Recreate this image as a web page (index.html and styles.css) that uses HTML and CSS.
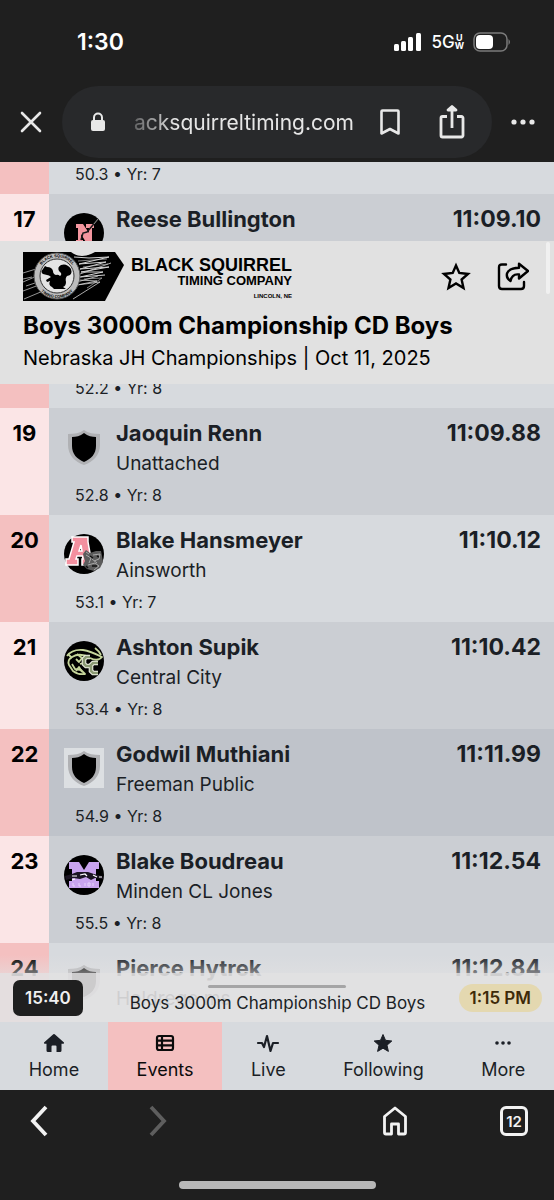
FILE: index.html
```html
<!DOCTYPE html>
<html lang="en">
<head>
    <meta charset="utf-8">
    <meta name="viewport" content="width=device-width, initial-scale=1">
    <title>Boys 3000m Championship CD Boys</title>
    <link rel="stylesheet" href="styles.css">
</head>
<body>
    <!-- shared shapes -->
    <svg class="defs" width="0" height="0" aria-hidden="true">
        <symbol id="shield" viewBox="0 0 40 40">
            <path d="M20 3 C16 6 10 7 4 7 V18 C4 28 11 35 20 38 C29 35 36 28 36 18 V7 C30 7 24 6 20 3Z" fill="#b0b1b4"/>
            <path d="M20 6 C16 9 12 10 8 10 V19 C8 27 13 32 20 35 C27 32 32 27 32 19 V10 C28 10 24 9 20 6Z" fill="#000"/>
        </symbol>
    </svg>

    <header class="browser-top">
        <div class="status">
            <span class="clock">1:30</span>
            <div class="signals">
                <svg width="28" height="20" viewBox="0 0 28 20" fill="#fff" aria-hidden="true">
                    <rect x="0" y="12" width="5" height="7" rx="1.5"/>
                    <rect x="7" y="9" width="5" height="10" rx="1.5"/>
                    <rect x="14" y="5" width="5" height="14" rx="1.5"/>
                    <rect x="22" y="1" width="5" height="18" rx="1.5"/>
                </svg>
                <span class="network">5G<span class="uw"><span>U</span><span>W</span></span></span>
                <svg width="38" height="20" viewBox="0 0 38 20" aria-hidden="true">
                    <rect x="1" y="1" width="33" height="18" rx="6" fill="none" stroke="#7b7b7b" stroke-width="1.5"/>
                    <rect x="3" y="3" width="17" height="14" rx="4" fill="#fff"/>
                    <path d="M35.5 7 q3 3 0 6z" fill="#7b7b7b"/>
                </svg>
            </div>
        </div>
        <div class="address">
            <button class="icon-btn close" type="button" aria-label="Close">
                <svg width="24" height="24" viewBox="0 0 24 24" fill="none" stroke="#e8e8e8" stroke-width="2.6" stroke-linecap="round"><path d="M3 3 L21 21 M21 3 L3 21"/></svg>
            </button>
            <div class="pill">
                <svg width="16" height="20" viewBox="0 0 16 20" aria-hidden="true">
                    <rect x="1" y="8" width="14" height="11" rx="2" fill="#e8e8e8"/>
                    <path d="M4 9 V5.5 a4 4 0 0 1 8 0 V9" fill="none" stroke="#e8e8e8" stroke-width="2"/>
                </svg>
                <button class="url" type="button">acksquirreltiming.com</button>
                <button class="icon-btn" type="button" aria-label="Bookmark">
                    <svg width="22" height="28" viewBox="0 0 22 28" fill="none" stroke="#e8e8e8" stroke-width="2.6" stroke-linejoin="round"><path d="M2.5 3.5 a1 1 0 0 1 1 -1 H18.500 a1 1 0 0 1 1 1 V25.5 L11 21 L2.5 25.5Z"/></svg>
                </button>
                <button class="icon-btn" type="button" aria-label="Share">
                    <svg width="28" height="36" viewBox="0 0 28 36" fill="none" stroke="#e8e8e8" stroke-width="2.8" stroke-linejoin="round"><path d="M9 12.5 H4.500 a1.5 1.5 0 0 0 -1.5 1.5 V31.5 a1.5 1.5 0 0 0 1.5 1.5 H23.500 a1.5 1.5 0 0 0 1.5 -1.5 V14 a1.5 1.5 0 0 0 -1.5 -1.5 H19 M14 24 V3"/><path d="M10 6 L14 2.500 L18 6Z" fill="#e8e8e8"/></svg>
                </button>
            </div>
            <button class="icon-btn more" type="button" aria-label="Menu">
                <svg width="24" height="6" viewBox="0 0 24 6" fill="#e8e8e8"><circle cx="3" cy="3" r="2.6"/><circle cx="12" cy="3" r="2.6"/><circle cx="21" cy="3" r="2.6"/></svg>
            </button>
        </div>
    </header>

    <main class="results">
        <table class="table">
            <tbody>
                <tr class="row even cut">
                    <td class="rank"></td>
                    <td class="athlete"><p class="meta">50.3 • Yr: 7</p></td>
                    <td class="mark"></td>
                </tr>
                <tr class="row odd">
                    <td class="rank">17</td>
                    <td class="athlete">
                        <div class="who">
                            <svg class="logo" viewBox="0 0 40 40" aria-hidden="true">
                                <circle cx="20" cy="20" r="20" fill="#000"/>
                                <path d="M12 11 H19 L25 20 V15 H22 V11 H30 V15 H28 V31 H23 L17 21 V27 H19 V31 H12 V27 H14 V15 H12Z" fill="#f3969f"/>
                                <path d="M34 6 L23 19 L19 20 L17 27" fill="none" stroke="#1b1b1b" stroke-width="1.5"/>
                                <path d="M34 6 L30 11" stroke="#8a8a8a" stroke-width="1"/>
                            </svg>
                            <div><p class="name">Reese Bullington</p></div>
                        </div>
                    </td>
                    <td class="mark">11:09.10</td>
                </tr>
                <tr class="row even">
                    <td class="rank"></td>
                    <td class="athlete low"><p class="meta">52.2 • Yr: 8</p></td>
                    <td class="mark"></td>
                </tr>
                <tr class="row odd">
                    <td class="rank">19</td>
                    <td class="athlete">
                        <div class="who">
                            <svg class="logo" aria-hidden="true"><use href="#shield"/></svg>
                            <div><p class="name">Jaoquin Renn</p><p class="team">Unattached</p></div>
                        </div>
                        <p class="meta">52.8 • Yr: 8</p>
                    </td>
                    <td class="mark">11:09.88</td>
                </tr>
                <tr class="row even">
                    <td class="rank">20</td>
                    <td class="athlete">
                        <div class="who">
                            <svg class="logo" viewBox="0 0 40 40" aria-hidden="true">
                                <circle cx="20" cy="20" r="20" fill="#000"/>
                                <path d="M8 3 H24 V8 L27 25 H29 V31 H18 V25 H19 L18.5 22 H13 L12 25 H14 V31 H2 V25 H5 L10 8 H8Z M15 17 H18 L17 11Z" fill="#f3909f" stroke="#fff" stroke-width="1.5" fill-rule="evenodd"/>
                                <path d="M19 20 L22 16 L26 19 L32 17 L37 17 L38 22 L39 28 L36 34 L30 37 L23 35 L19 31 L21 27Z" fill="#5c5c5c"/>
                                <path d="M22 21 L27 24 L25 29 M29 21 L36 20 L35 25 L30 27 M24 31 L31 29 L35 32 L30 36 M22 18 L25 20 M28 25 L33 29" fill="none" stroke="#a8a8a8" stroke-width="1"/>
                                <path d="M26 22 L29 24 M33 22 L35 23 M28 32 H33 M22 32 L24 34" stroke="#111" stroke-width="1.5"/>
                            </svg>
                            <div><p class="name">Blake Hansmeyer</p><p class="team">Ainsworth</p></div>
                        </div>
                        <p class="meta">53.1 • Yr: 7</p>
                    </td>
                    <td class="mark">11:10.12</td>
                </tr>
                <tr class="row odd">
                    <td class="rank">21</td>
                    <td class="athlete">
                        <div class="who">
                            <svg class="logo" viewBox="0 0 40 40" aria-hidden="true">
                                <circle cx="20" cy="20" r="20" fill="#000"/>
                                <g fill="none" stroke="#c5d59b" stroke-width="1.8" stroke-linejoin="round">
                                    <path d="M3 15 Q8 8 19 9 Q26 10 38 16 Q34 21 26 17 Q16 11 8 16 Q3 19 5 24 L9 30 Q14 34 21 33 L17 29 L11 28 L8 23"/>
                                    <path d="M13 13 L18 17 L15 21 L12 18 M16 23 L19 22 M12 30 L15 26 L18 31 M4 13 L8 17 M31 7 Q35 10 37 14"/>
                                </g>
                                <path d="M26 16 H22 L20 18 V23 L22 25 H26 M34 22 H29 L27 24 V30 L29 32 H34" fill="none" stroke="#f0f3e6" stroke-width="4.600"/>
                                <path d="M26 16 H22 L20 18 V23 L22 25 H26 M34 22 H29 L27 24 V30 L29 32 H34" fill="none" stroke="#8b9a74" stroke-width="2.600"/>
                            </svg>
                            <div><p class="name">Ashton Supik</p><p class="team">Central City</p></div>
                        </div>
                        <p class="meta">53.4 • Yr: 8</p>
                    </td>
                    <td class="mark">11:10.42</td>
                </tr>
                <tr class="row active">
                    <td class="rank">22</td>
                    <td class="athlete">
                        <div class="who">
                            <svg class="logo tile" aria-hidden="true"><use href="#shield"/></svg>
                            <div><p class="name">Godwil Muthiani</p><p class="team">Freeman Public</p></div>
                        </div>
                        <p class="meta">54.9 • Yr: 8</p>
                    </td>
                    <td class="mark">11:11.99</td>
                </tr>
                <tr class="row odd">
                    <td class="rank">23</td>
                    <td class="athlete">
                        <div class="who">
                            <svg class="logo" viewBox="0 0 40 40" aria-hidden="true">
                                <circle cx="20" cy="20" r="20" fill="#000"/>
                                <path d="M5 7 H15 L20 15 L25 7 H35 V14 H32 V26 H35 V33 H5 V26 H8 V14 H5Z" fill="#c9a4ee"/>
                                <path d="M1 21 L8 19 L13 17 H24 L30 19 L38 21 L39 24 L31 23 L27 25 L22 22 L16 24 L9 23 L2 25Z" fill="#1c1523"/>
                                <path d="M8 21 L13 21 M16 20 L21 19 L23 21 M29 20 L33 22 M11 24 L8 25 M35 22 L38 22" fill="none" stroke="#fff" stroke-width="1.2"/>
                                <path d="M9 28 V31 H11 M15 28 V31 H17 M21 28 V31 M24 28 H26 V31 H24Z M29 28 V31" fill="none" stroke="#e6d3fb" stroke-width="1"/>
                            </svg>
                            <div><p class="name">Blake Boudreau</p><p class="team">Minden CL Jones</p></div>
                        </div>
                        <p class="meta">55.5 • Yr: 8</p>
                    </td>
                    <td class="mark">11:12.54</td>
                </tr>
                <tr class="row even">
                    <td class="rank">24</td>
                    <td class="athlete">
                        <div class="who">
                            <svg class="logo" aria-hidden="true"><use href="#shield"/></svg>
                            <div><p class="name">Pierce Hytrek</p><p class="team">Holdrege ms</p></div>
                        </div>
                    </td>
                    <td class="mark">11:12.84</td>
                </tr>
            </tbody>
        </table>

        <section class="event">
            <div class="event-top">
                <a class="brand" href="#">
                    <svg width="102" height="50" viewBox="0 0 102 50" aria-hidden="true">
                        <path d="M0 0 H92 L101 13 L82 49 H0Z" fill="#000"/>
                        <path d="M48 0 Q58 8 72 0Z" fill="#e1e1e1"/>
                        <g fill="none" stroke="#d4d4d4">
                            <path d="M0 21 L13 17 M0 30 L14 24 M0 27 L9 25 M0 39 L16 33 M1 47 L20 39 M3 34 L12 31" stroke-width="0.7"/>
                            <path d="M51 5 L66 6 L86 5 L56 12 L83 10 L57 17 L86 15 L58 20 L80 20 L57 25 L82 23" stroke-width="1"/>
                            <path d="M56 28 L74 29 L54 33 L77 30 L50 47 M57 22 L88 11 M54 30 L75 24" stroke-width="0.8"/>
                            <path d="M55 9 L84 7 M60 15 L85 12 M61 27 L79 26 L64 36" stroke-width="0.6"/>
                        </g>
                        <circle cx="34" cy="24" r="23" fill="#bdbdbd" stroke="#555" stroke-width="1"/>
                        <circle cx="34" cy="24" r="17" fill="#e4e4e4" stroke="#333" stroke-width="1"/>
                        <path id="ringTop" d="M15 24 A19 19 0 0 1 53 24" fill="none"/>
                        <path id="ringBottom" d="M12 24 A22 22 0 0 0 56 24" fill="none"/>
                        <text class="ring"><textPath href="#ringTop" startOffset="50%" text-anchor="middle">BLACK SQUIRREL</textPath></text>
                        <text class="ring"><textPath href="#ringBottom" startOffset="50%" text-anchor="middle">TIMING COMPANY</textPath></text>
                        <path d="M20 17 L22 14 L24 15 Q29 15 30 19 Q30 22 33 23 Q35 22 37 24 Q40 22 36 19 Q34 15 38 13 Q44 11 48 17 Q50 23 44 24 Q42 26 43 30 Q43 34 40 35 L43 37 H31 L29 35 Q25 33 27 29 L24 30 L23 28 L28 25 Q26 23 24 23 L20 22 Q17 20 20 17Z" fill="#000"/>
                    </svg>
                    <span class="brand-text">
                        <span class="brand-name">BLACK SQUIRREL</span>
                        <span class="brand-sub">TIMING COMPANY</span>
                        <span class="brand-city">LINCOLN, NE</span>
                    </span>
                </a>
                <div class="event-actions">
                    <button class="icon-btn" type="button" aria-label="Follow event">
                        <svg width="30" height="30" viewBox="0 0 30 30" fill="none" stroke="#000" stroke-width="2.4"><path d="M15 3.5 L18.300 11 L27 12 L20.600 17.500 L22.5 26 L15 21.5 L7.500 26 L9.4 17.5 L3 12 L11.7 11Z"/></svg>
                    </button>
                    <button class="icon-btn" type="button" aria-label="Share event">
                        <svg width="32" height="30" viewBox="0 0 32 30" fill="none" stroke="#000" stroke-width="2.4" stroke-linejoin="round" stroke-linecap="round">
                            <path d="M9 2.5 H5 Q2 2.500 2 5.5 V24 Q2 27 5 27 H24 Q27 27 27 24 V20"/>
                            <path d="M22 1.8 L31 9 L22 16.5 V12.5 Q15 11.500 13.5 19 Q9 16 10 11.5 Q12 6 22 5.8Z"/>
                        </svg>
                    </button>
                </div>
            </div>
            <h1 class="event-title">Boys 3000m Championship CD Boys</h1>
            <p class="event-meet">Nebraska JH Championships | Oct 11, 2025</p>
            <span class="scrollbar"></span>
        </section>

        <section class="ticker">
            <span class="handle"></span>
            <span class="timer">15:40</span>
            <span class="ticker-title">Boys 3000m Championship CD Boys</span>
            <span class="start">1:15 PM</span>
        </section>
    </main>

    <nav class="tabs">
        <a class="tab" href="#">
            <svg width="24" height="24" viewBox="0 0 24 24" fill="#1b1f26" aria-hidden="true"><path d="M11.3 3.2 Q12 2.6 12.7 3.2 L22 11.5 Q22.5 12.8 21 12.8 H19.5 V19.5 Q19.5 21 18 21 H14.5 V15.5 Q14.5 14.5 13.5 14.5 H10.5 Q9.5 14.5 9.5 15.5 V21 H6 Q4.5 21 4.5 19.5 V12.8 H3 Q1.5 12.8 2 11.5Z"/></svg>
            <span>Home</span>
        </a>
        <a class="tab selected" href="#">
            <svg width="24" height="24" viewBox="0 0 24 24" fill="none" stroke="#0b0b0b" stroke-width="2.2" aria-hidden="true"><rect x="4" y="5" width="16" height="14" rx="2"/><path d="M4 9.7 H20 M4 14.3 H20 M9 5 V19"/></svg>
            <span>Events</span>
        </a>
        <a class="tab" href="#">
            <svg width="24" height="24" viewBox="0 0 24 24" fill="none" stroke="#1b1f26" stroke-width="2.2" stroke-linejoin="round" stroke-linecap="round" aria-hidden="true"><path d="M2 12 H6 L8 16 L11 5 L14.5 20 L17 12 H22"/></svg>
            <span>Live</span>
        </a>
        <a class="tab" href="#">
            <svg width="24" height="24" viewBox="0 0 24 24" fill="#1b1f26" stroke="#1b1f26" stroke-linejoin="round" aria-hidden="true"><path d="M12 3.5 L14.5 9.3 L20.8 10 L16 14.2 L17.4 20.4 L12 17.2 L6.6 20.4 L8 14.2 L3.2 10 L9.5 9.3Z"/></svg>
            <span>Following</span>
        </a>
        <a class="tab" href="#">
            <svg width="24" height="24" viewBox="0 0 24 24" fill="#1b1f26" aria-hidden="true"><circle cx="6" cy="12" r="1.8"/><circle cx="12" cy="12" r="1.8"/><circle cx="18" cy="12" r="1.8"/></svg>
            <span>More</span>
        </a>
    </nav>

    <footer class="browser-bottom">
        <div class="browser-nav">
            <button class="icon-btn" type="button" aria-label="Back">
                <svg width="20" height="34" viewBox="0 0 20 34" fill="none" stroke="#f2f2f2" stroke-width="3.8"><path d="M17 3 L4 17 L17 31"/></svg>
            </button>
            <button class="icon-btn" type="button" aria-label="Forward">
                <svg width="20" height="34" viewBox="0 0 20 34" fill="none" stroke="#5e5e5e" stroke-width="3.8"><path d="M3 3 L16 17 L3 31"/></svg>
            </button>
            <span class="spacer"></span>
            <button class="icon-btn" type="button" aria-label="Home page">
                <svg width="26" height="30" viewBox="0 0 26 30" fill="none" stroke="#f2f2f2" stroke-width="2.8" stroke-linejoin="round"><path d="M2.500 10.5 L13 2 L23.500 10.5 V26.5 Q23.500 28 22 28 H16.500 V18 H9.500 V28 H4 Q2.500 28 2.500 26.5Z"/></svg>
            </button>
            <button class="tabs-count" type="button" aria-label="12 open tabs">12</button>
        </div>
        <span class="home-bar"></span>
    </footer>
</body>
</html>
```

FILE: styles.css
```css
* {box-sizing:border-box;}
body {margin:0; height:100vh; display:flex; flex-direction:column; background:#1f1f1f; font-family:Inter, "Liberation Sans", sans-serif; color:#1b1f26; overflow:hidden;}
p, h1 {margin:0;}
a {color:inherit; text-decoration:none;}
button {font-family:inherit; padding:0; border:0; background:none; color:inherit;}
svg {display:block; flex:none;}
.defs {position:absolute;}
.icon-btn {display:flex; align-items:center; justify-content:center;}

/* browser chrome, top */
.browser-top {flex:none; height:162px; color:#fff;}
.status {height:84px; display:flex; justify-content:space-between; align-items:center; padding:0 43px 0 77px;}
.clock {font-size:23px; font-weight:600;}
.signals {display:flex; align-items:center; gap:9px;}
.network {display:flex; align-items:center; font-size:17px; font-weight:500;}
.uw {display:flex; flex-direction:column; align-items:center; font-size:9px; line-height:8px; font-weight:700;}
.address {display:flex; align-items:center; padding:2px 19px 0;}
.pill {flex:1; height:72px; display:flex; align-items:center; margin:0 19px; padding:0 26px 0 28px; border-radius:36px; background:#28292b;}
.url {flex:1; text-align:right; padding-right:25px; font-size:21px; color:#e6e6e6; white-space:nowrap; -webkit-mask-image:linear-gradient(to right, transparent 10px, #000 70px); mask-image:linear-gradient(to right, transparent 10px, #000 70px);}
.pill .icon-btn + .icon-btn {margin-left:37px;}

/* results */
.results {flex:1; min-height:0; position:relative; overflow:hidden; background:#d7dade;}
.table {width:100%; border-collapse:collapse;}
.row {height:107px;}
.row.cut {height:32px;}
.row td {padding:0; vertical-align:top;}
.odd {background:#cbced3;}
.even {background:#d7dade;}
.active {background:#bfc3ca;}
.row .rank {width:49px; padding-top:11px; font-size:22px; line-height:28px; font-weight:700; text-align:center; color:#000; background:#f4c0c0;}
.odd .rank {background:#fbe5e6;}
.row .athlete {padding-left:15px;}
.row .athlete.low, .cut .athlete {vertical-align:bottom;}
.who {display:flex; gap:12px; height:66px; padding-top:11px;}
.logo {width:40px; height:40px; margin-top:8px;}
.tile {background:#dcdfe2;}
.name {font-size:22px; line-height:28px; font-weight:700;}
.team {margin-top:3px; font-size:19px; line-height:28px;}
.meta {height:41px; padding:9px 0 0 11px; font-size:16px; line-height:24px;}
.cut .meta {height:32px; padding-top:0;}
.row .mark {padding:11px 13px 0 0; font-size:23px; line-height:28px; font-weight:700; text-align:right;}

/* event header, stays over the list */
.event {position:absolute; top:79px; left:0; right:0; height:143px; padding:11px 25px 0 23px; background:#e1e1e1; color:#000;}
.event-top {display:flex; justify-content:space-between; align-items:center;}
.brand {display:flex; gap:6px;}
.brand-text {display:flex; flex-direction:column; align-items:flex-end; padding-top:4px; font-family:"Liberation Sans", Arial, sans-serif; font-weight:700;}
.brand-name {font-size:18px; line-height:18px;}
.brand-sub {font-size:13px; line-height:13px;}
.brand-city {margin-top:5px; font-size:6px; line-height:8px;}
.ring {font-family:"Liberation Sans", Arial, sans-serif; font-size:4px; font-weight:700;}
.event-actions {display:flex; gap:26px;}
.event-title {margin-top:8px; font-size:24px; line-height:32px; font-weight:700; white-space:nowrap;}
.event-meet {margin-top:2px; font-size:20px; line-height:28px; white-space:nowrap;}
.scrollbar {position:absolute; top:1px; right:4px; width:4px; height:52px; border-radius:2px; background:#f0f0f0;}

/* now-running strip */
.ticker {position:absolute; left:0; right:0; bottom:0; height:49px; display:grid; grid-template-columns:1fr auto 1fr; align-items:center; padding:0 12px 0 13px; background:rgba(226,225,226,.9);}
.ticker::before {content:""; position:absolute; left:0; right:0; bottom:49px; height:18px; background:linear-gradient(rgba(226,225,226,0), rgba(226,225,226,.5));}
.handle {position:absolute; top:12px; left:50%; width:138px; height:3px; margin-left:-69px; border-radius:2px; background:#a5a5a6;}
.timer {justify-self:start; padding:8px 12px; border-radius:7px; background:#1f1f1f; color:#f0f0f0; font-size:17px; line-height:20px; font-weight:600;}
.ticker-title {padding-top:11px; font-size:17px; line-height:20px; white-space:nowrap;}
.start {justify-self:end; padding:4px 11px; border-radius:14px; background:#e4d8b0; color:#3d2a08; font-size:17px; line-height:20px; font-weight:600;}

/* site tabs */
.tabs {flex:none; height:68px; display:flex; background:#d7dade;}
.tab {flex:1 1 auto; display:flex; flex-direction:column; align-items:center; padding-top:9px; font-size:18px; line-height:24px;}
.tab span {padding-top:3px;}
.selected {background:#f4c0c0; color:#0b0b0b;}

/* browser chrome, bottom */
.browser-bottom {flex:none; height:110px; display:flex; flex-direction:column; align-items:center; justify-content:space-between; padding-bottom:11px;}
.browser-nav {width:100%; display:flex; align-items:center; padding:14px 26px 0 29px;}
.browser-nav .icon-btn + .icon-btn {margin-left:99px;}
.spacer {flex:1;}
.tabs-count {width:28px; height:30px; margin-left:92px; border:3px solid #f2f2f2; border-radius:6px; color:#f2f2f2; font-size:15px; font-weight:600;}
.home-bar {width:197px; height:8px; border-radius:4px; background:#b8b8b8;}
```
